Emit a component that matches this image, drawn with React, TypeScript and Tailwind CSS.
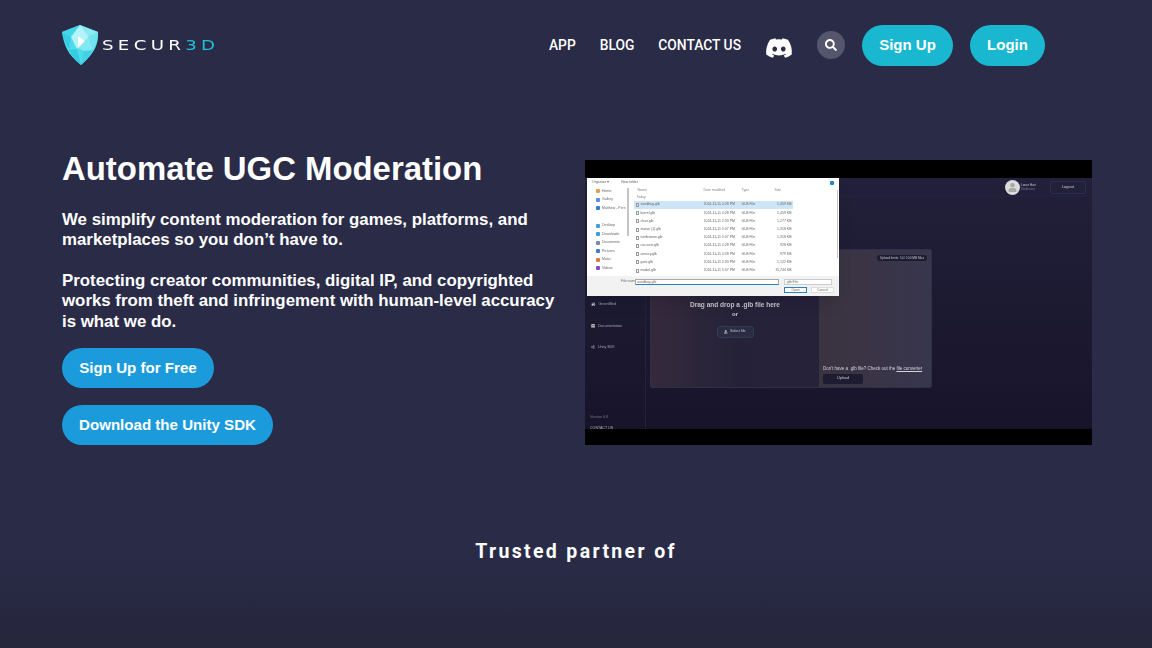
import { FaDiscord, FaSearch, FaHome, FaBook, FaUnity, FaUpload, FaUser } from "react-icons/fa";

const quickAccess = [
  { label: "Home", color: "bg-[#e8a04a]" },
  { label: "Gallery", color: "bg-[#5a8fd8]" },
  { label: "Matthew - Pers", color: "bg-[#2f7fd0]" },
];

const pinned = [
  { label: "Desktop", color: "bg-[#4a9ad8]" },
  { label: "Downloads", color: "bg-[#3aa0d8]" },
  { label: "Documents", color: "bg-[#7a8aa8]" },
  { label: "Pictures", color: "bg-[#3a80d0]" },
  { label: "Music", color: "bg-[#d87a50]" },
  { label: "Videos", color: "bg-[#7a50c8]" },
];

const files = [
  { name: "sandbag.glb", date: "2024-11-11 4:28 PM", size: "1,459 KB", active: true },
  { name: "barrel.glb", date: "2024-11-11 4:28 PM", size: "1,459 KB" },
  { name: "chair.glb", date: "2024-11-11 2:33 PM", size: "1,277 KB" },
  { name: "statue (1).glb", date: "2024-11-11 5:47 PM", size: "1,318 KB" },
  { name: "tombstone.glb", date: "2024-11-11 5:47 PM", size: "1,318 KB" },
  { name: "car-seat.glb", date: "2024-11-11 4:28 PM", size: "928 KB" },
  { name: "armory.glb", date: "2024-11-11 4:28 PM", size: "979 KB" },
  { name: "gate.glb", date: "2024-11-11 2:33 PM", size: "1,122 KB" },
  { name: "model.glb", date: "2024-11-11 5:47 PM", size: "15,744 KB" },
];

function Logo() {
  return (
    <svg width="37" height="40" viewBox="0 0 37 40">
      <path d="M18 0 L36 7 C36.500 18 34 27 19 40 C5 29 2 20 0 7 Z" fill="#4cdcec" />
      <path d="M18 0 L36 7 L27 12 Z" fill="#8aeaf3" />
      <path d="M18 0 L0 7 L9 12 Z" fill="#45d6e8" />
      <path d="M0 7 L9 12 L7 25 C4 20 1.500 14 0 7 Z" fill="#38cfe4" />
      <path d="M36 7 L27 12 L31 25 C34 20 36 14 36 7 Z" fill="#70e3f0" />
      <path d="M18 0 L9 12 L15 24 L27 12 Z" fill="#b4f4f8" />
      <path d="M16 11 L24 17 L16 23 Z" fill="#ffffff" />
      <path d="M7 25 L15 24 L19 40 C14 36 10 31 7 25 Z" fill="#35cbe0" />
      <path d="M31 25 L22 26 L19 40 C24 36 28 31 31 25 Z" fill="#40d2e6" />
      <path d="M27 12 L31 25 L22 26 L16 23 Z" fill="#84e8f2" />
    </svg>
  );
}

function FileDialog() {
  return (
    <div className="absolute left-[2px] top-[18px] w-[252px] h-[118px] bg-white shadow-lg flex flex-col blur-[0.7px] text-[3.5px] text-[#666] font-['Liberation_Sans',sans-serif]">
      <div className="h-[9px] flex items-center gap-[12px] px-[5px] shrink-0">
        <span>Organize ▾</span>
        <span>New folder</span>
        <span className="ml-auto w-[4px] h-[4px] bg-[#1a8ad0] rounded-[1px]" />
      </div>
      <div className="flex flex-1 min-h-0">
        <div className="w-[40px] bg-white pl-[9px] flex flex-col overflow-hidden">
          {quickAccess.map((q) => (
            <div key={q.label} className="h-[8.5px] flex items-center gap-[2px] shrink-0 whitespace-nowrap">
              <span className={`w-[4px] h-[4px] rounded-[1px] ${q.color}`} />
              {q.label}
            </div>
          ))}
          <div className="h-[9px] shrink-0" />
          {pinned.map((p) => (
            <div key={p.label} className="h-[8.5px] flex items-center gap-[2px] shrink-0 whitespace-nowrap">
              <span className={`w-[4px] h-[4px] rounded-[1px] ${p.color}`} />
              {p.label}
            </div>
          ))}
        </div>
        <div className="w-[1.5px] h-[48px] mt-[1px] bg-[#c4c4c4] shrink-0" />
        <div className="flex-1 min-w-0 pl-[5px] pr-[1px] overflow-hidden flex">
          <div className="w-[159px] shrink-0">
            <div className="h-[7px] flex items-center pl-[4px] text-[#888]">
              <span className="w-[66px]">Name</span>
              <span className="w-[38px]">Date modified</span>
              <span className="w-[33px]">Type</span>
              <span>Size</span>
            </div>
            <div className="h-[7px] flex items-center pl-[3px] text-[#888]">Today</div>
            {files.map((f) => (
              <div key={f.name} className={`h-[8.2px] flex items-center pl-[2px] ${f.active ? "bg-[#cde6f7]" : ""}`}>
                <span className="w-[68px] flex items-center gap-[2px]">
                  <span className="w-[3px] h-[4px] border-[0.5px] border-[#999]" />
                  {f.name}
                </span>
                <span className="w-[38px] whitespace-nowrap overflow-hidden">{f.date}</span>
                <span className="w-[30px]">GLB File</span>
                <span className="ml-auto pr-[1px]">{f.size}</span>
              </div>
            ))}
          </div>
          <div className="ml-auto w-[1.5px] bg-[#c8c8c8] my-[3px] mb-[18px]" />
        </div>
      </div>
      <div className="h-[20px] bg-[#f2f2f2] shrink-0 flex flex-col px-[3px]">
        <div className="flex items-center mt-[2px] h-[7px]">
          <span className="ml-[31px] mr-[2px] w-[12px] whitespace-nowrap">File name:</span>
          <span className="w-[144px] h-[6px] bg-white border-[0.5px] border-[#aaa] border-b-[#2a80c0] px-[1px] leading-[5px]">sandbag.glb</span>
          <span className="ml-[5px] w-[48px] h-[6px] bg-white border-[0.5px] border-[#ccc] px-[1px] leading-[5px]">.glb File</span>
        </div>
        <div className="flex justify-end gap-[4px] mt-[2px] pr-[2px]">
          <span className="w-[23px] h-[6px] bg-white border-[0.5px] border-[#2a80c0] text-center leading-[5px]">Open</span>
          <span className="w-[23px] h-[6px] bg-white border-[0.5px] border-[#ddd] text-center leading-[5px]">Cancel</span>
        </div>
      </div>
    </div>
  );
}

function VideoFrame() {
  return (
    <div className="relative w-[507px] h-[285px] bg-black shrink-0 flex flex-col mt-[2px] font-['Liberation_Sans',sans-serif]">
      <div className="h-[18px] shrink-0" />
      <div className="flex-1 min-h-0 flex bg-gradient-to-b from-[#22203a] to-[#17142a]">
        <div className="w-[61px] shrink-0 border-r border-[#252238] pt-[124px] pl-[6px] flex flex-col text-[3.6px] text-[#a9a8b8] blur-[0.5px]">
          <div className="h-[21.500px] flex items-start gap-[3px]">
            <FaHome className="text-[4.500px] text-[#bbb]" />
            GreenMind
          </div>
          <div className="h-[21px] flex items-start gap-[3px]">
            <FaBook className="text-[4px] text-[#bbb]" />
            Documentation
          </div>
          <div className="h-[21px] flex items-start gap-[3px]">
            <FaUnity className="text-[4px] text-[#bbb]" />
            Unity SDK
          </div>
          <div className="mt-auto -mb-[2px] -ml-[1px] flex flex-col gap-[5px] text-[#77768a]">
            <span>Version 0.8</span>
            <span className="text-[#b0b0c0]">CONTACT US</span>
          </div>
        </div>
        <div className="flex-1 min-w-0 flex flex-col">
          <div className="h-[19px] shrink-0 border-b border-[#2a2840]/40 flex items-center justify-end pr-[6px] gap-[1px] blur-[0.5px]">
            <span className="w-[15px] h-[15px] rounded-full bg-[#dcdcdc] flex items-center justify-center overflow-hidden">
              <FaUser className="text-[9px] text-[#a8a8a8]" />
            </span>
            <span className="flex flex-col text-[3px] leading-[4px] text-[#c9c9d4] w-[20px] mr-[8px]">
              <span>Lance Hart</span>
              <span className="text-[#77768a]">Moderator</span>
            </span>
            <span className="w-[36px] h-[13px] border border-[#2b2f4a] rounded-[2px] flex items-center justify-center text-[4px] text-[#c9c9d4]">Logout</span>
          </div>
          <div className="ml-[4px] mt-[52px] w-[282px] h-[139px] flex rounded-[2px] overflow-hidden border border-[#2f3048]">
            <div className="w-[168px] bg-gradient-to-r from-[#352a3c] via-[#252238] to-[#25223a] flex flex-col items-center pt-[49px] blur-[0.5px]">
              <span className="text-[6.5px] font-bold text-[#c4c4cc] mt-[1px]">Drag and drop a .glb file here</span>
              <span className="text-[6px] font-bold text-[#c4c4cc]">or</span>
              <span className="mt-[7px] w-[37px] h-[12px] rounded-[3px] bg-[#2b2c44] border border-[#2e3c58] flex items-center justify-center gap-[2px] text-[3.6px] text-[#c4c4cc]">
                <FaUpload className="text-[3.6px]" />
                Select file
              </span>
            </div>
            <div className="flex-1 bg-gradient-to-r from-[#3b3340] to-[#38364e] flex flex-col pl-[4px] blur-[0.5px]">
              <span className="self-end mt-[5px] mr-[4px] h-[6px] px-[3px] rounded-full bg-[#1d1c30] text-[3.2px] text-[#c9c9d4] flex items-center whitespace-nowrap">Upload limits: 10 / 100 MB Max</span>
              <span className="mt-auto text-[4.5px] text-[#d4d4dc] whitespace-nowrap">
                Don't have a .glb file? Check out the <span className="underline">file converter</span>
              </span>
              <span className="mt-[1px] mb-[3px] w-[40px] h-[10px] rounded-[2px] bg-[#1d1c30] text-[3.8px] text-[#c9c9d4] flex items-center justify-center">Upload</span>
            </div>
          </div>
        </div>
      </div>
      <div className="h-[16px] shrink-0" />
      <FileDialog />
    </div>
  );
}

export default function App() {
  return (
    <div className="h-[648px] overflow-hidden bg-gradient-to-b from-[#2a2b47] from-[85%] to-[#25253c] font-['Liberation_Sans',sans-serif] text-white flex flex-col">
      <header className="h-[90px] shrink-0 pl-[62px] pr-[107px] flex items-center">
        <div className="flex items-center gap-[3px]">
          <Logo />
          <span className="font-['DejaVu_Sans',sans-serif] text-[14px] tracking-[3.3px] font-normal scale-x-[1.3] origin-left">
            SECUR<span className="text-[#1fc0d8]">3D</span>
          </span>
        </div>
        <nav className="ml-auto flex items-center font-['Roboto',sans-serif] font-medium text-[13.8px]">
          <a>APP</a>
          <a className="ml-[24px]">BLOG</a>
          <a className="ml-[24px]">CONTACT US</a>
          <FaDiscord className="ml-[24px] mt-[6px] text-[28px]" />
          <span className="ml-[24px] w-[28px] h-[28px] rounded-full bg-[#55566c] flex items-center justify-center">
            <FaSearch className="text-[12px]" />
          </span>
          <a className="ml-[17px] h-[41px] w-[91px] rounded-full bg-[#1ab8d0] flex items-center justify-center font-['Liberation_Sans',sans-serif] font-bold text-[15px]">Sign Up</a>
          <a className="ml-[17px] h-[41px] w-[75px] rounded-full bg-[#1ab8d0] flex items-center justify-center font-['Liberation_Sans',sans-serif] font-bold text-[15px]">Login</a>
        </nav>
      </header>

      <main className="pl-[62px] pr-[60px] pt-[68px] flex justify-between">
        <div className="w-[500px]">
          <h1 className="text-[32.900px] leading-[40px] font-bold -mt-[9px]">Automate UGC Moderation</h1>
          <p className="mt-[21px] text-[16.850px] leading-[20.400px] font-bold">
            We simplify content moderation for games, platforms, and marketplaces so you don’t have to.
          </p>
          <p className="mt-[20px] text-[16.850px] leading-[20.400px] font-bold">
            Protecting creator communities, digital IP, and copyrighted works from theft and infringement with human-level accuracy is what we do.
          </p>
          <div className="mt-[16px] flex flex-col items-start gap-[17px]">
            <a className="h-[40px] w-[152px] justify-center rounded-full bg-[#1b9bdb] flex items-center font-bold text-[15.100px]">Sign Up for Free</a>
            <a className="h-[40px] w-[211px] justify-center rounded-full bg-[#1b9bdb] flex items-center font-bold text-[15.100px]">Download the Unity SDK</a>
          </div>
        </div>
        <VideoFrame />
      </main>

      <h2 className="mt-[92px] text-center font-['Roboto',sans-serif] font-bold text-[19.500px] tracking-[0.12em]">Trusted partner of</h2>
    </div>
  );
}
